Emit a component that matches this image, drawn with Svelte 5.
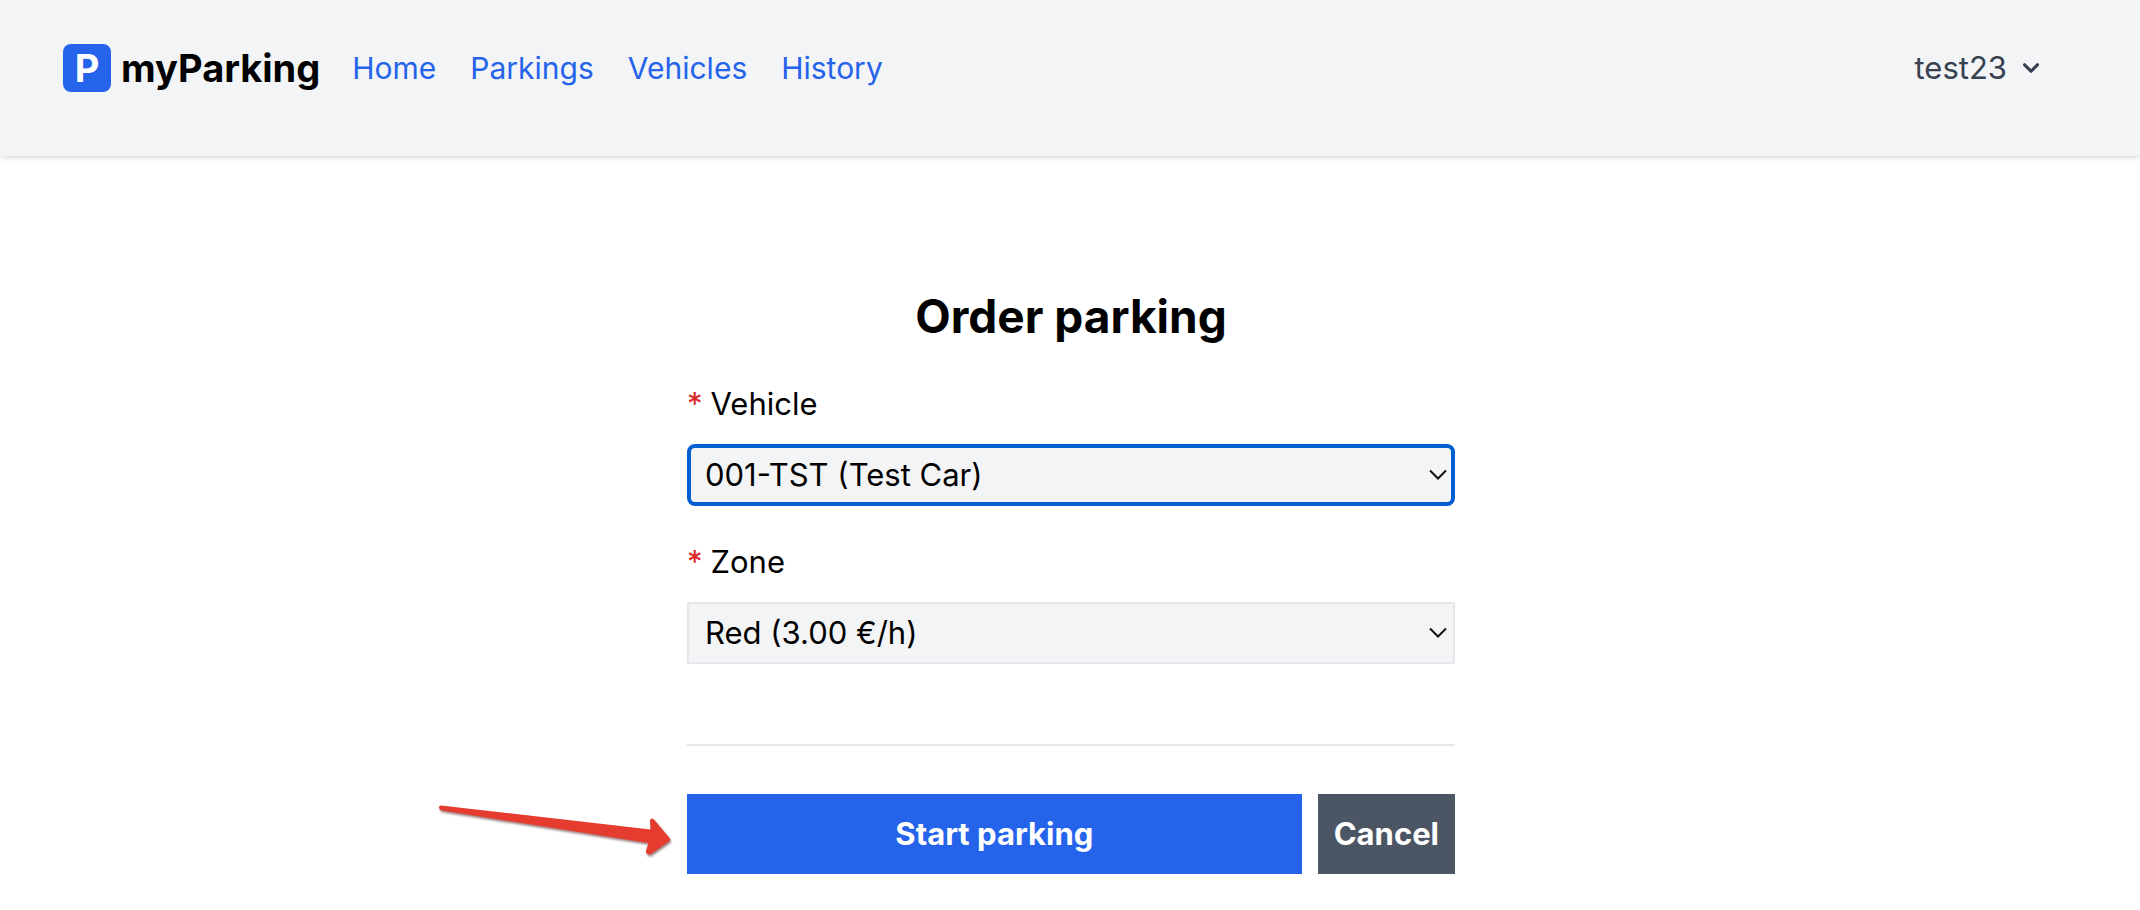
<script>
  const links = ['Home', 'Parkings', 'Vehicles', 'History'];
  const vehicles = ['001-TST (Test Car)'];
  const zones = ['Red (3.00 €/h)'];
  let vehicle = $state(vehicles[0]);
  let zone = $state(zones[0]);
</script>

<header>
  <a class="brand" href="#home">
    <span class="mark">P</span>
    <span>myParking</span>
  </a>
  <nav>
    {#each links as link}
      <a href="#{link.toLowerCase()}">{link}</a>
    {/each}
  </nav>
  <button class="account" type="button">
    test23
    <svg width="32" height="32" viewBox="0 0 20 20" aria-hidden="true">
      <path fill="currentColor" fill-rule="evenodd" clip-rule="evenodd" d="M5.293 7.293a1 1 0 011.414 0L10 10.586l3.293-3.293a1 1 0 111.414 1.414l-4 4a1 1 0 01-1.414 0l-4-4a1 1 0 010-1.414z" />
    </svg>
  </button>
</header>

{#snippet chevron()}
  <svg class="chevron" width="18" height="12" viewBox="0 0 18 12" aria-hidden="true">
    <path d="M1 1.5 9 9.5 17 1.5" fill="none" stroke="#111" stroke-width="2" />
  </svg>
{/snippet}

<main>
  <form onsubmit={(e) => e.preventDefault()}>
    <h1>Order parking</h1>

    <div class="field">
      <label for="vehicle"><span class="required">*</span>Vehicle</label>
      <div class="control">
        <select id="vehicle" class="active" bind:value={vehicle}>
          {#each vehicles as v}<option>{v}</option>{/each}
        </select>
        {@render chevron()}
      </div>
    </div>

    <div class="field">
      <label for="zone"><span class="required">*</span>Zone</label>
      <div class="control">
        <select id="zone" bind:value={zone}>
          {#each zones as z}<option>{z}</option>{/each}
        </select>
        {@render chevron()}
      </div>
    </div>

    <hr />

    <div class="actions">
      <button class="start" type="submit">Start parking</button>
      <button class="cancel" type="button">Cancel</button>
      <svg class="arrow" width="240" height="64" viewBox="0 0 240 64" aria-hidden="true">
        <path d="M4 7.5 Q1.5 7.5 2 10 Q2.5 12.3 5 12.5 L211.5 45 L209 52.5 Q208.5 56 212 56.5 L214 56 L232.5 43 Q234 41.5 232.5 40 L217 21.5 Q213.5 19 213 23 L213.5 31.5 Z" />
      </svg>
    </div>
  </form>
</main>

<style>
  :global(body) {
    margin: 0;
    background: #fff;
    color: #000;
    font-family: Inter, 'Liberation Sans', sans-serif;
    font-size: 31px;
    line-height: 48px;
  }

  header {
    display: flex;
    align-items: center;
    padding: 44px 93px 64px 63px;
    background: #f3f4f6;
    box-shadow: 0 2px 6px rgb(0 0 0 / 0.1), 0 2px 4px -2px rgb(0 0 0 / 0.1);
  }

  a {
    color: #2563eb;
    text-decoration: none;
  }

  .brand {
    display: flex;
    gap: 10px;
    color: #000;
    font-size: 38px;
    font-weight: 700;
  }

  .mark {
    width: 48px;
    border-radius: 8px;
    background: #2563eb;
    color: #fff;
    text-align: center;
  }

  nav {
    display: flex;
    gap: 34px;
    margin-left: 32px;
    font-size: 30px;
  }

  button {
    border: 0;
    font: inherit;
    cursor: pointer;
  }

  .account {
    display: flex;
    align-items: center;
    gap: 8px;
    margin-left: auto;
    padding: 0;
    background: none;
    color: #374151;
  }

  main {
    padding: 128px 32px 36px 34px;
  }

  form {
    display: flex;
    flex-direction: column;
    max-width: 768px;
    margin: 0 auto;
  }

  h1 {
    margin: 0 0 32px;
    font-size: 46px;
    font-weight: 700;
    line-height: 64px;
    text-align: center;
  }

  .field {
    display: flex;
    flex-direction: column;
    gap: 16px;
    margin-bottom: 32px;
  }

  .required {
    margin-right: 8px;
    color: #dc2626;
  }

  .control {
    display: grid;
    align-items: center;
  }

  .control > :global(*) {
    grid-area: 1 / 1;
  }

  select {
    box-sizing: border-box;
    width: 100%;
    height: 62px;
    padding: 0 48px 0 16px;
    border: 2px solid #e5e7eb;
    border-radius: 0;
    background: #f3f4f6;
    color: #000;
    font: inherit;
    appearance: none;
  }

  select.active {
    padding: 0 46px 0 14px;
    border: 4px solid #005fd1;
    border-radius: 8px;
  }

  select:focus {
    outline: none;
  }

  .chevron {
    justify-self: end;
    margin-right: 8px;
    pointer-events: none;
  }

  hr {
    width: 100%;
    height: 2px;
    margin: 48px 0;
    border: 0;
    background: #e5e7eb;
  }

  .actions {
    position: relative;
    display: flex;
    gap: 16px;
  }

  .start,
  .cancel {
    padding: 16px;
    color: #fff;
    font-weight: 700;
  }

  .start {
    flex: 1;
    background: #2563eb;
  }

  .cancel {
    background: #4b5563;
  }

  .arrow {
    position: absolute;
    top: 4px;
    right: 100%;
    margin-right: 10px;
    fill: #e63c2f;
    filter: drop-shadow(1px 2px 1px rgb(60 0 0 / 0.5));
    pointer-events: none;
  }
</style>
